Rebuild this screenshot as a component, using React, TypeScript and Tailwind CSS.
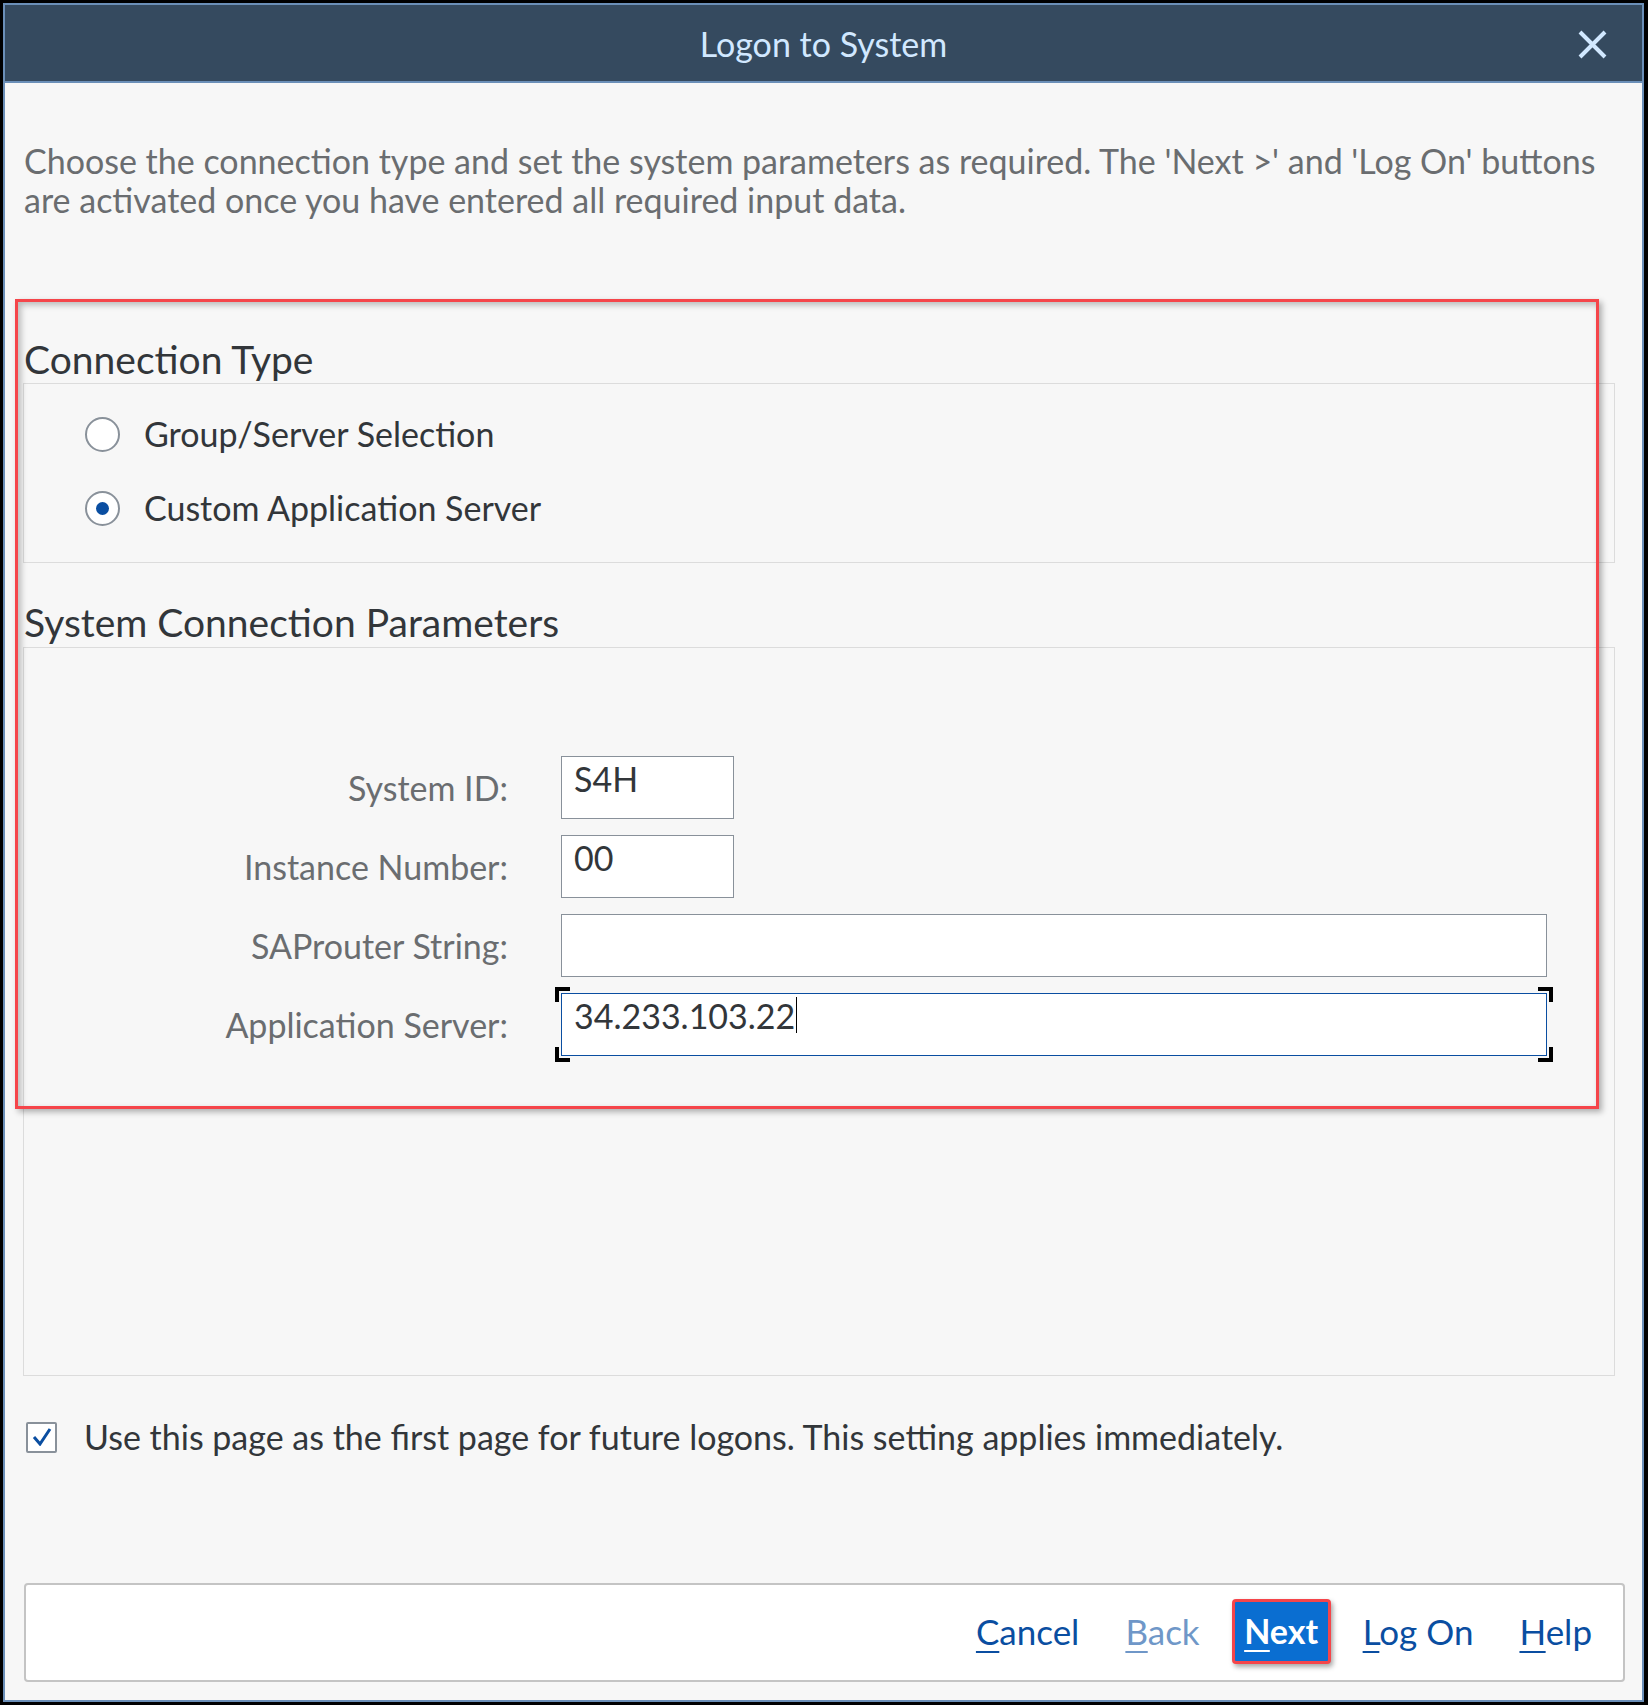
import React from "react";

const font = { fontFamily: "Lato, 'Liberation Sans', sans-serif" };

function Radio({ checked, label }: { checked?: boolean; label: string }) {
  return (
    <div className="flex h-[50px] items-center">
      <div className="flex h-[35px] w-[35px] items-center justify-center rounded-full border-2 border-[#89919a] bg-white">
        {checked && <div className="h-[13px] w-[13px] rounded-full bg-[#0a4ea1]" />}
      </div>
      <span className="ml-[24px] text-[34px] leading-[40px] text-[#32363a]">{label}</span>
    </div>
  );
}

function Field({
  label,
  value,
  wide,
  focused,
}: {
  label: string;
  value?: string;
  wide?: boolean;
  focused?: boolean;
}) {
  return (
    <div className="flex h-[63px] items-center">
      <div className="w-[484px] text-right text-[34px] leading-[40px] text-[#6a6d70]">{label}</div>
      <div className="relative ml-[53px]">
        <div
          className={`h-[63px] border bg-white pl-[12px] pt-[3px] text-[34px] leading-[38px] text-[#32363a] ${
            wide ? "w-[986px]" : "w-[173px]"
          } ${focused ? "border-[#0a4ea1]" : "border-[#89919a]"}`}
        >
          <span className="relative">
            {value}
            {focused && <span className="absolute -right-[2px] top-[2px] h-[36px] w-px bg-black" />}
          </span>
        </div>
        {focused && (
          <>
            {/* focus brackets */}
            <div className="absolute -left-[6px] -top-[6px] h-[15px] w-[15px] border-l-[4px] border-t-[4px] border-black" />
            <div className="absolute -right-[6px] -top-[6px] h-[15px] w-[15px] border-r-[4px] border-t-[4px] border-black" />
            <div className="absolute -bottom-[6px] -left-[6px] h-[15px] w-[15px] border-b-[4px] border-l-[4px] border-black" />
            <div className="absolute -bottom-[6px] -right-[6px] h-[15px] w-[15px] border-b-[4px] border-r-[4px] border-black" />
          </>
        )}
      </div>
    </div>
  );
}

function LinkButton({ first, rest, disabled }: { first: string; rest: string; disabled?: boolean }) {
  return (
    <button
      className={`px-[14px] text-[35px] leading-[40px] ${disabled ? "text-[#6f97c8]" : "text-[#0a4ea1]"}`}
    >
      <span className="underline decoration-2 underline-offset-[6px]">{first}</span>
      {rest}
    </button>
  );
}

export default function App() {
  return (
    <div style={font} className="h-[1705px] w-[1648px] border-[3px] border-r-[4px] border-black">
      <div className="relative flex h-full w-full flex-col border-2 border-[#6b8fb8] bg-[#f7f7f7]">
        {/* Title bar */}
        <div className="relative flex h-[78px] shrink-0 items-center justify-center border-b-2 border-[#6b8fb8] bg-[#354a5f]">
          <span className="text-[34px] text-[#d1e8ff]">Logon to System</span>
          <svg
            className="absolute right-[35px] top-[25px]"
            width="29"
            height="29"
            viewBox="0 0 29 29"
            fill="none"
            stroke="#d1e8ff"
            strokeWidth="4"
          >
            <path d="M2 2L27 27M27 2L2 27" />
          </svg>
        </div>

        {/* Body */}
        <div className="flex flex-1 flex-col pl-[18px] pr-[27px]">
          <p className="mt-[58px] pl-[1px] text-[34px] leading-[39px] text-[#6a6d70]">
            Choose the connection type and set the system parameters as required. The 'Next &gt;' and 'Log On' buttons
            are activated once you have entered all required input data.
          </p>

          <h2 className="mt-[118px] pl-[1px] text-[39px] leading-[44px] text-[#32363a]">Connection Type</h2>
          <div className="mt-[2px] flex h-[180px] flex-col gap-[24px] border border-[#dcdcdc] pl-[61px] pt-[25px]">
            <Radio label="Group/Server Selection" />
            <Radio checked label="Custom Application Server" />
          </div>

          <h2 className="mt-[37px] pl-[1px] text-[39px] leading-[44px] text-[#32363a]">System Connection Parameters</h2>
          <div className="mt-[3px] flex h-[729px] flex-col gap-[16px] border border-[#dcdcdc] pt-[108px]">
            <Field label="System ID:" value="S4H" />
            <Field label="Instance Number:" value="00" />
            <Field label="SAProuter String:" wide />
            <Field label="Application Server:" value="34.233.103.22" wide focused />
          </div>

          <div className="mt-[41px] flex items-center pl-[3px]">
            <div className="flex h-[31px] w-[31px] items-center justify-center rounded-[2px] border-2 border-[#89919a] bg-white">
              <svg width="20" height="18" viewBox="0 0 20 18" fill="none" stroke="#0a4ea1" strokeWidth="3">
                <path d="M2 9L8 16L18 1" />
              </svg>
            </div>
            <span className="ml-[27px] text-[34px] leading-[40px] text-[#32363a]">
              Use this page as the first page for future logons. This setting applies immediately.
            </span>
          </div>
        </div>

        {/* Footer */}
        <div className="mb-[18px] ml-[19px] mr-[17px] mt-auto flex h-[99px] items-center justify-end gap-[18px] rounded-[4px] border-2 border-[#c4c4c4] bg-white pb-[3px] pr-[17px]">
          <LinkButton first="C" rest="ancel" />
          <LinkButton first="B" rest="ack" disabled />
          <button className="h-[65px] w-[99px] rounded-[4px] border-[3px] border-[#f5454a] bg-[#0a6ed1] text-[34px] font-bold leading-[40px] text-white shadow-[2px_3px_5px_rgba(0,0,0,0.35)]">
            <span className="underline decoration-2 underline-offset-[6px]">N</span>ext
          </button>
          <LinkButton first="L" rest="og On" />
          <LinkButton first="H" rest="elp" />
        </div>

        {/* Annotation highlight */}
        <div className="pointer-events-none absolute left-[10px] top-[294px] h-[810px] w-[1584px] border-[3px] border-[#f5454a] shadow-[3px_3px_6px_rgba(0,0,0,0.3),inset_3px_3px_6px_rgba(0,0,0,0.25)]" />
      </div>
    </div>
  );
}
